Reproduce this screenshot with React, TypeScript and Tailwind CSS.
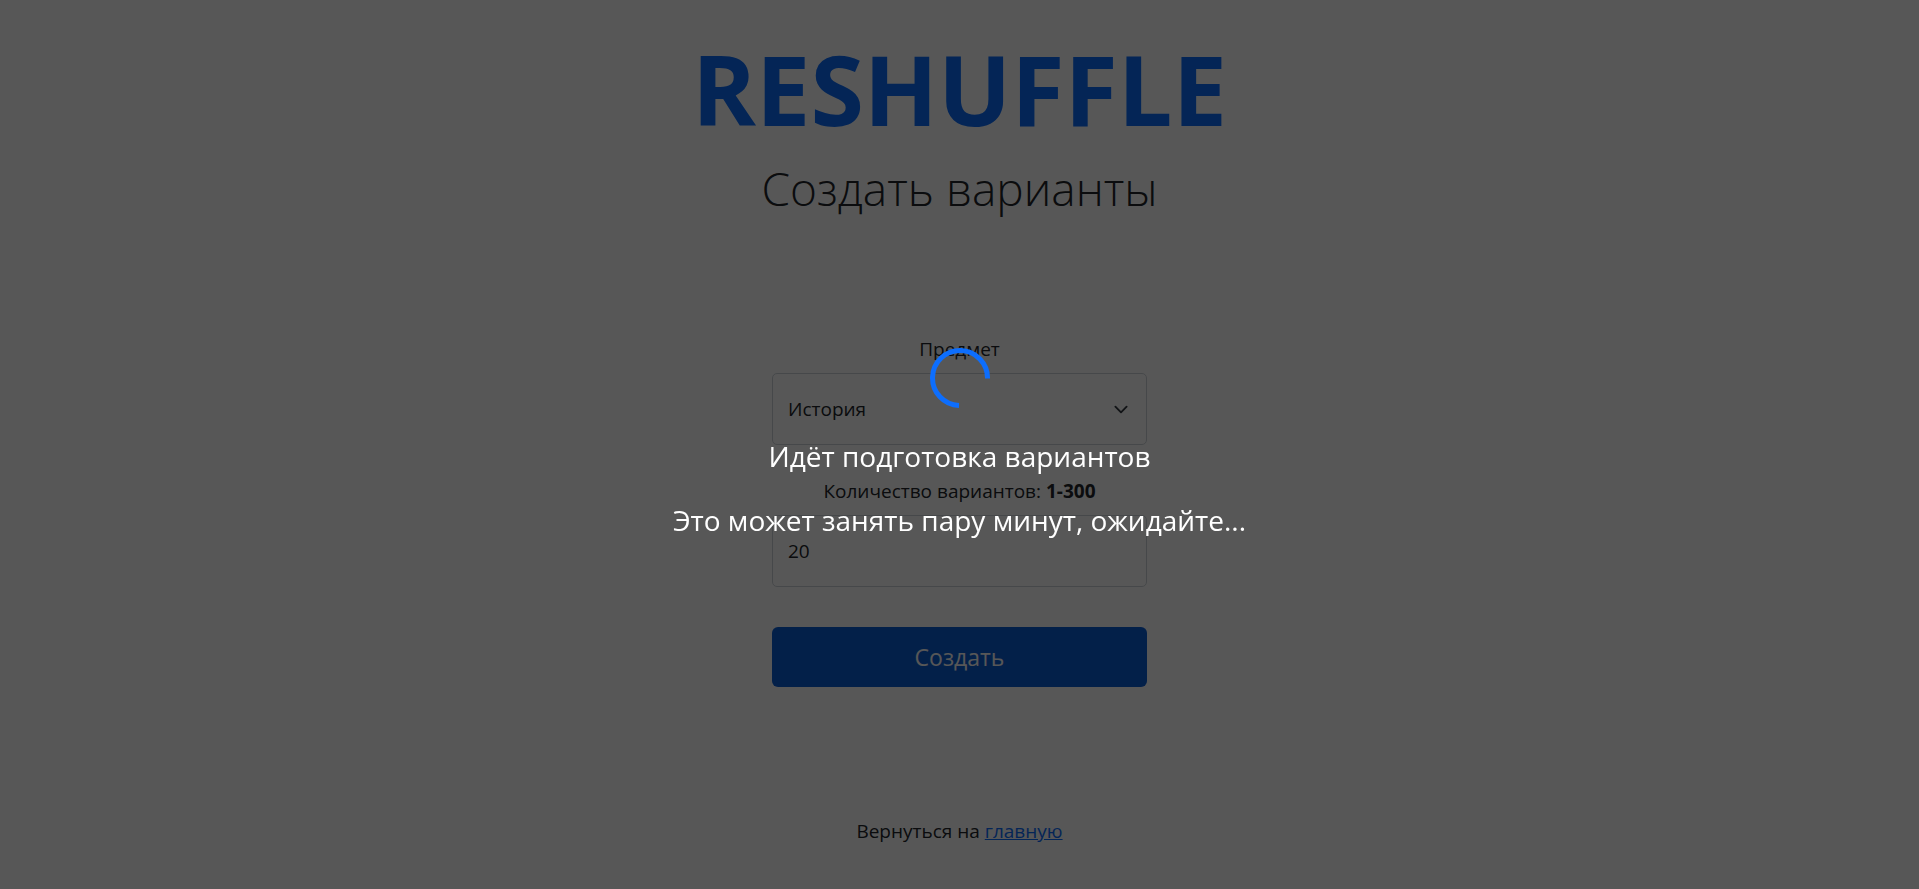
import { useState } from "react";

function Spinner() {
  return (
    <svg className="h-[60px] w-[60px]" viewBox="0 0 60 60" fill="none" role="status" aria-label="Загрузка">
      <path d="M57.5 30.5A27.5 27.5 0 1 0 29 57.5" stroke="#0d6efd" strokeWidth="5" />
    </svg>
  );
}

function Overlay() {
  return (
    <div className="fixed inset-0 flex flex-col items-center justify-center bg-black/66 pb-[6px] text-center text-[28px] leading-8 text-white">
      <Spinner />
      <p className="mt-8">Идёт подготовка вариантов</p>
      <p className="mt-8">Это может занять пару минут, ожидайте...</p>
    </div>
  );
}

export default function App() {
  const [subject, setSubject] = useState("История");
  const [count, setCount] = useState("20");

  return (
    <div className="min-h-screen bg-white font-['Open_Sans','Noto_Sans',sans-serif] text-[19px] leading-[30px] text-[#212529]">
      <main className="flex flex-col items-center pt-7 text-center">
        <h1 className="text-[97px] leading-[120px] font-bold text-[#0d6efd]">RESHUFFLE</h1>
        <h2 className="mt-[10px] text-[46px] leading-[60px] font-light">Создать варианты</h2>
        <form className="mt-[116px] flex w-[375px] max-w-full flex-col" onSubmit={(e) => e.preventDefault()}>
          <label htmlFor="subject">Предмет</label>
          <div className="mt-[9px] grid">
            <select
              id="subject"
              value={subject}
              onChange={(e) => setSubject(e.target.value)}
              className="col-start-1 row-start-1 h-[72px] appearance-none rounded-[5px] border border-[#ced4da] bg-white px-[15px]"
            >
              <option>История</option>
            </select>
            <svg
              className="pointer-events-none col-start-1 row-start-1 mr-[16px] h-[15px] w-5 self-center justify-self-end"
              viewBox="0 0 16 16"
              fill="none"
              stroke="#343a40"
              strokeWidth="2"
              strokeLinecap="round"
              strokeLinejoin="round"
            >
              <path d="m2 5 6 6 6-6" />
            </svg>
          </div>
          <label htmlFor="count" className="mt-[31px]">
            Количество вариантов: <b>1-300</b>
          </label>
          <input
            id="count"
            inputMode="numeric"
            value={count}
            onChange={(e) => setCount(e.target.value)}
            className="mt-[9px] h-[72px] rounded-[5px] border border-[#ced4da] bg-white px-[15px]"
          />
          <button type="submit" className="mt-[40px] h-[60px] rounded-[6px] bg-[#0b5ed7] text-[23px] text-white">
            Создать
          </button>
        </form>
        <p className="mt-[129px]">
          Вернуться на{" "}
          <a href="#home" className="text-[#0d6efd] underline">
            главную
          </a>
        </p>
      </main>
      <Overlay />
    </div>
  );
}
